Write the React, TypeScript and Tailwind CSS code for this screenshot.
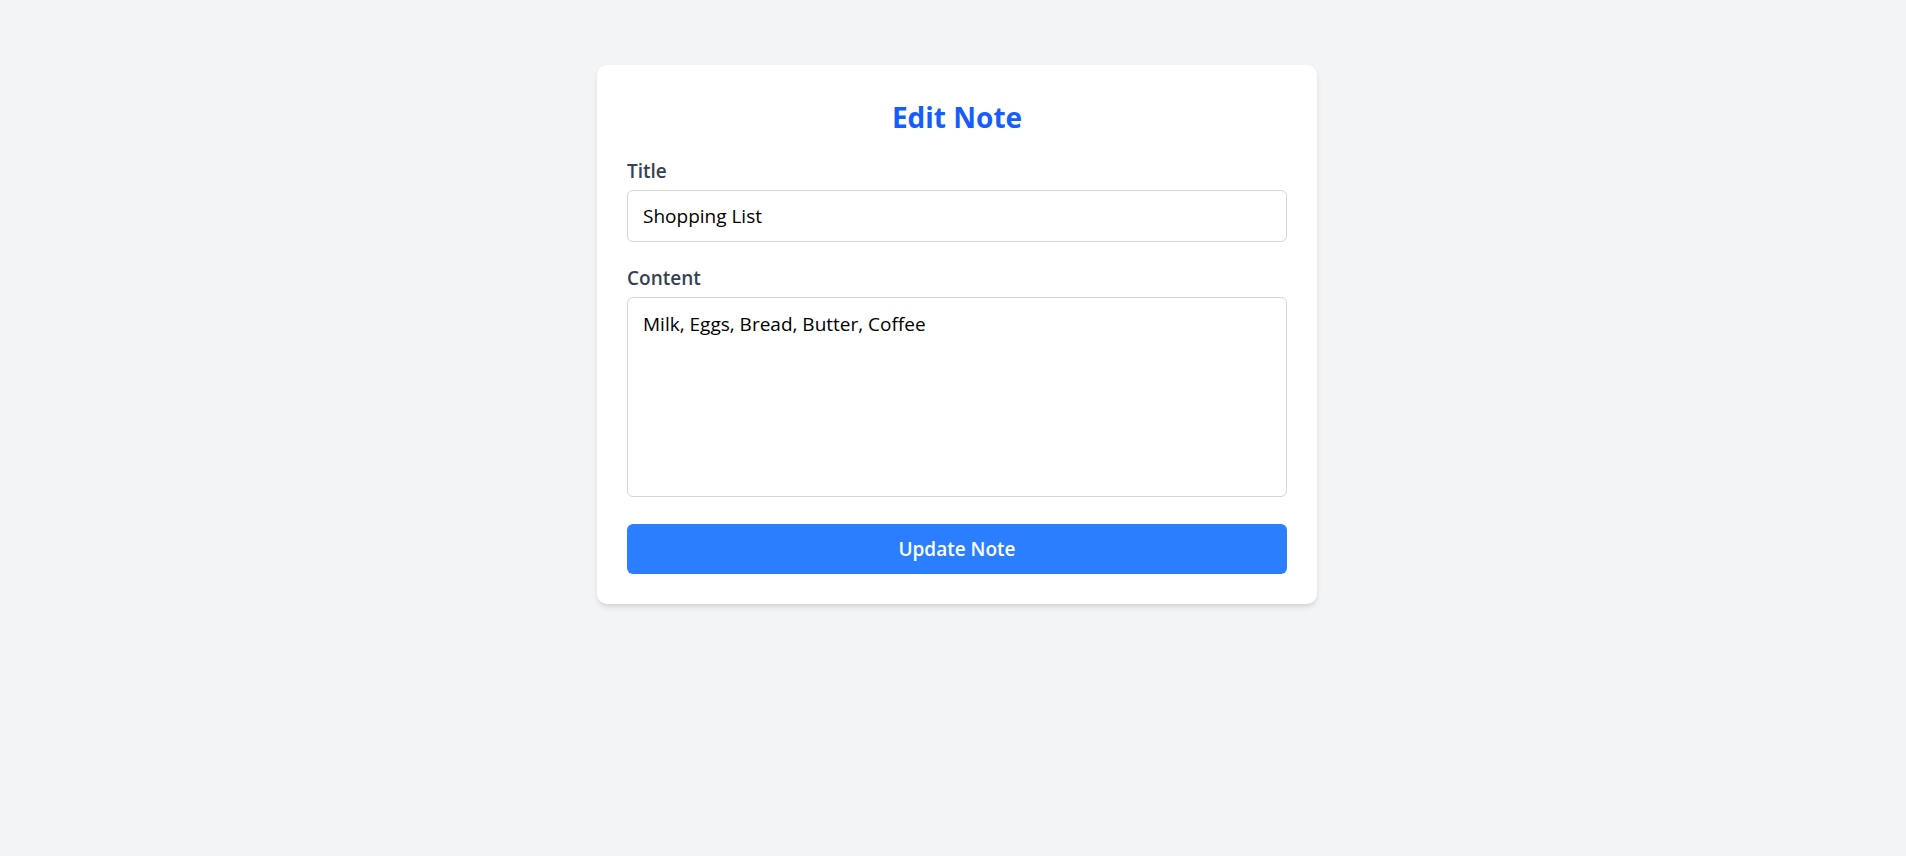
import React, { useState } from "react";

export default function App() {
  const [title, setTitle] = useState("Shopping List");
  const [content, setContent] = useState("Milk, Eggs, Bread, Butter, Coffee");

  return (
    <div
      className="min-h-screen w-full bg-gray-100 flex justify-center pl-[8px] pt-[65px]"
      style={{ fontFamily: '"Open Sans", "Noto Sans", "Liberation Sans", sans-serif' }}
    >
      <div className="w-[720px] h-fit bg-white rounded-[10px] shadow-md p-[30px] flex flex-col">
        <h1 className="text-center text-[28px] leading-[40px] font-bold text-blue-600 pt-[2px] mb-[21px]">
          Edit Note
        </h1>

        <label className="text-[19px] leading-[26px] font-semibold text-gray-700 mb-[6px]">
          Title
        </label>
        <input
          value={title}
          onChange={(e) => setTitle(e.target.value)}
          className="h-[52px] border border-gray-300 rounded-md px-[15px] text-[19px] text-black outline-none mb-[23px]"
        />

        <label className="text-[19px] leading-[26px] font-semibold text-gray-700 mb-[6px]">
          Content
        </label>
        <textarea
          value={content}
          onChange={(e) => setContent(e.target.value)}
          className="h-[200px] border border-gray-300 rounded-md px-[15px] py-3 text-[19px] leading-[28px] text-black outline-none resize-none mb-[27px]"
        />

        <button className="h-[50px] bg-blue-500 rounded-md text-white text-[19px] font-semibold">
          Update Note
        </button>
      </div>
    </div>
  );
}
